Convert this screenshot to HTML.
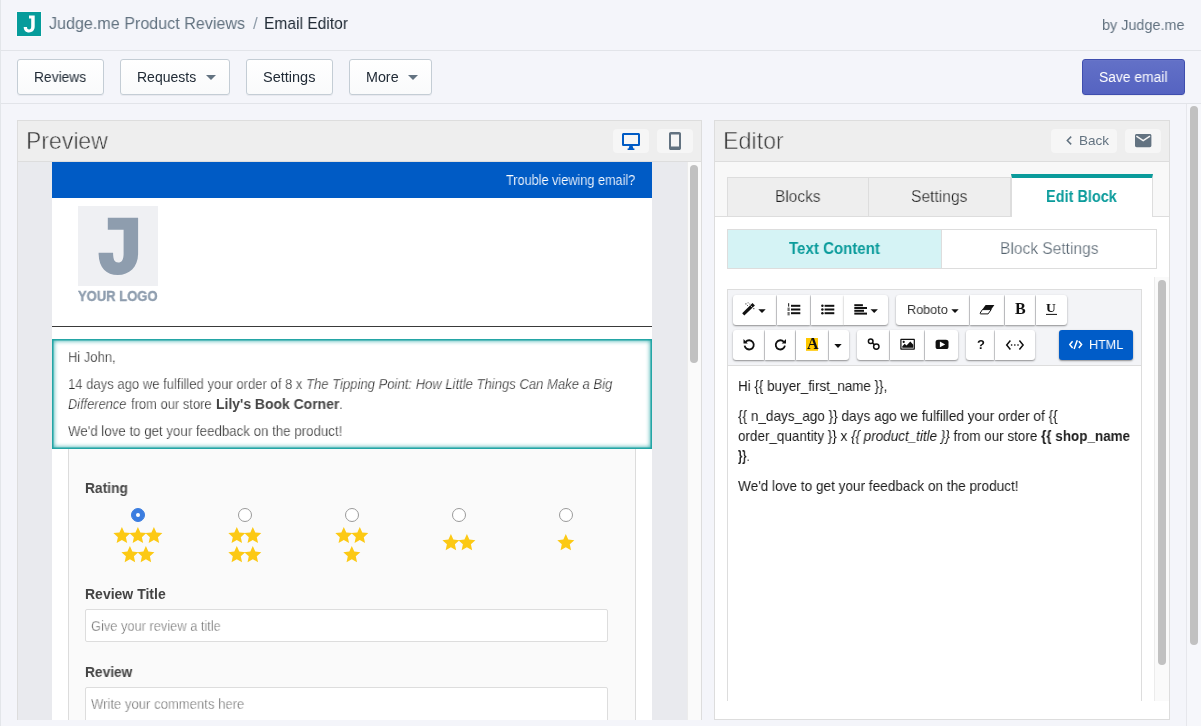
<!DOCTYPE html>
<html>
<head>
<meta charset="utf-8">
<title>Email Editor</title>
<style>
*{box-sizing:border-box;margin:0;padding:0}
html,body{width:1201px;height:726px;overflow:hidden}
body{background:#f4f5fa;font-family:"Liberation Sans",sans-serif;color:#212b36;position:relative}
.a{position:absolute}
.t{position:absolute;display:inline-block;white-space:nowrap;transform-origin:0 50%;will-change:transform}
.btn{position:absolute;top:59px;height:36px;border:1px solid #c4cdd5;border-radius:3px;background:linear-gradient(#fff,#f9fafb);box-shadow:0 1px 0 rgba(22,29,37,.05)}
.car{position:absolute;width:0;height:0;border-left:5px solid transparent;border-right:5px solid transparent;border-top:5px solid #637381}
.ib{position:absolute;top:129px;height:24px;border-radius:4px;background:#f6f6f6}
.tab{position:absolute;top:177px;height:40px;background:#eee;border:1px solid #ddd}
.nb{position:absolute;height:30px;background:#fff;border-radius:3px;box-shadow:0 1px 1.5px rgba(0,0,0,.32),0 1px 3px rgba(0,0,0,.12)}
.r1{top:295px}.r2{top:330px}
.radio{position:absolute;top:508px;width:14px;height:14px;border-radius:50%;border:1px solid #9a9a9a;background:#fff}
svg{position:absolute;overflow:visible}

</style>
</head>
<body>
<svg width="0" height="0" style="left:0;top:0"><defs>
<symbol id="star" viewBox="0 0 100 95.1" overflow="visible"><path d="M50.0 0.0 L64.5 32.6 L100.0 36.3 L73.5 60.2 L80.9 95.1 L50.0 77.3 L19.1 95.1 L26.5 60.2 L0.0 36.3 L35.5 32.6 Z" fill="#fcc914"/></symbol>
</defs></svg>
<!-- top bars -->
<div class="a" style="left:0;top:50px;width:1201px;height:1px;background:#e2e4e9"></div>
<div class="a" style="left:0;top:103px;width:1201px;height:1px;background:#e2e4e9"></div>
<div class="a" style="left:0;top:0;width:1px;height:726px;background:#e3e6ea"></div>
<div class="a" style="left:17px;top:12px;width:24px;height:24px;background:#069c9b;box-shadow:0 0 0 1px rgba(255,255,255,.4)"></div>
<svg style="left:17px;top:12px" width="24" height="24" viewBox="0 0 24 24"><path d="M12 3.500H17.700V14.500C17.700 18.500 15.300 20.400 12 20.400 8.800 20.400 6.700 18.300 6.700 14.900H10C10 16.600 10.700 17.400 12.100 17.400 13.500 17.400 14.200 16.500 14.200 14.500V6.600H12Z" fill="#fff"/></svg>
<div class="btn" style="left:17px;width:87px"></div>
<div class="btn" style="left:120px;width:110px"></div>
<div class="btn" style="left:246px;width:87px"></div>
<div class="btn" style="left:349px;width:83px"></div>
<div class="car" style="left:206px;top:75px"></div>
<div class="car" style="left:408px;top:75px"></div>
<div class="btn" style="left:1082px;width:103px;background:linear-gradient(#6371c7,#5563c1);border-color:#3f4eae;box-shadow:inset 0 1px 0 0 #6774c8,0 1px 0 0 rgba(22,29,37,.05)"></div>
<!-- page scrollbar -->
<div class="a" style="left:1186px;top:104px;width:15px;height:622px;background:#f6f7fb;border-left:1px solid #e6e7ec"></div>
<div class="a" style="left:1190px;top:106px;width:8px;height:539px;border-radius:4px;background:#c1c1c1"></div>

<!-- ================= PREVIEW PANEL ================= -->
<div class="a" style="left:17px;top:120px;width:685px;height:600px;background:#fff;border:1px solid #ddd;border-bottom:0"></div>
<div class="a" style="left:18px;top:121px;width:683px;height:41px;background:#eee;border-bottom:1px solid #ddd"></div>
<div class="ib" style="left:613px;width:36px"></div>
<div class="ib" style="left:657px;width:36px"></div>
<!-- desktop icon -->
<svg style="left:622px;top:132.5px" width="18" height="17" viewBox="0 0 18 17"><path d="M1.6 0h14.8c.9 0 1.6.7 1.6 1.600v9.800c0 .9-.7 1.600-1.600 1.600H1.600C.7 13 0 12.300 0 11.400V1.600C0 .7.7 0 1.600 0zm.4 2v9h14V2z" fill="#005bc5" fill-rule="evenodd"/><path d="M7.400 13h3.200l.8 2.600h1v1.400H5.600v-1.400h1z" fill="#005bc5"/></svg>
<!-- mobile icon -->
<svg style="left:669px;top:132px" width="12" height="18" viewBox="0 0 12 18"><path d="M1.800 0h8.400c1 0 1.800.8 1.800 1.800v14.400c0 1-.8 1.800-1.800 1.800H1.800C.8 18 0 17.200 0 16.200V1.800C0 .8.800 0 1.800 0zM2 2.500v12h8v-12z" fill="#637381" fill-rule="evenodd"/></svg>
<!-- preview content -->
<div class="a" style="left:18px;top:162px;width:34px;height:558px;background:#e9eaee"></div>
<div class="a" style="left:652px;top:162px;width:35px;height:558px;background:#e9eaee"></div>
<div class="a" style="left:687px;top:162px;width:14px;height:558px;background:#fafafa;border-left:1px solid #ececec"></div>
<div class="a" style="left:690px;top:165px;width:8px;height:198px;border-radius:4px;background:#c1c1c1"></div>
<div class="a" style="left:52px;top:162px;width:600px;height:36px;background:#005bc5"></div>
<div class="a" style="left:78px;top:206px;width:80px;height:80px;background:#eff0f3"></div>
<svg style="left:78px;top:206px" width="80" height="80" viewBox="0 0 80 80"><path d="M29.800 11.800H60.100V47.500C60.100 61 51.500 69 39.800 69 28 69 20.600 61.500 20.600 46.800H35.100C35.100 53.500 36.500 56.500 40.200 56.500 43.800 56.500 45.600 53.800 45.600 47.500V23.700H29.800z" fill="#8e9dae"/></svg>
<div class="a" style="left:52px;top:326px;width:600px;height:1px;background:#3a3a3a"></div>
<!-- form -->
<div class="a" style="left:68px;top:449px;width:568px;height:271px;background:#fafafa;border-left:1px solid #dcdcdc;border-right:1px solid #dcdcdc"></div>
<!-- selected block -->
<div class="a" style="left:52px;top:339px;width:600px;height:110px;background:#fff;box-shadow:inset 0 0 0 1.5px rgba(22,160,160,.85),inset 0 0 4px 2px rgba(22,160,160,.8)"></div>
<!-- radios -->
<div class="radio" style="left:131px;border-color:#3b7de0;background:#3b7de0"></div>
<div class="a" style="left:136px;top:513px;width:4px;height:4px;border-radius:50%;background:#fff"></div>
<div class="radio" style="left:238px"></div>
<div class="radio" style="left:345px"></div>
<div class="radio" style="left:452px"></div>
<div class="radio" style="left:559px"></div>
<!-- stars -->
<svg style="left:0;top:0" width="1201" height="726">
<use href="#star" x="113.40" y="526.90" width="17.0" height="16.2"/>
<use href="#star" x="129.40" y="526.90" width="17.0" height="16.2"/>
<use href="#star" x="145.40" y="526.90" width="17.0" height="16.2"/>
<use href="#star" x="121.40" y="546.00" width="17.0" height="16.2"/>
<use href="#star" x="137.40" y="546.00" width="17.0" height="16.2"/>
<use href="#star" x="228.30" y="526.90" width="17.0" height="16.2"/>
<use href="#star" x="228.30" y="546.00" width="17.0" height="16.2"/>
<use href="#star" x="244.30" y="526.90" width="17.0" height="16.2"/>
<use href="#star" x="244.30" y="546.00" width="17.0" height="16.2"/>
<use href="#star" x="335.30" y="526.90" width="17.0" height="16.2"/>
<use href="#star" x="351.30" y="526.90" width="17.0" height="16.2"/>
<use href="#star" x="343.30" y="546.00" width="17.0" height="16.2"/>
<use href="#star" x="442.40" y="534.00" width="17.0" height="16.2"/>
<use href="#star" x="458.40" y="534.00" width="17.0" height="16.2"/>
<use href="#star" x="557.30" y="534.00" width="17.0" height="16.2"/>
</svg>
<!-- inputs -->
<div class="a" style="left:85px;top:609px;width:523px;height:33px;background:#fff;border:1px solid #ddd;border-radius:2px"></div>
<div class="a" style="left:85px;top:687px;width:523px;height:40px;background:#fff;border:1px solid #ddd;border-radius:2px"></div>
<!-- mask below preview -->
<div class="a" style="left:0;top:720px;width:711px;height:6px;background:#f4f5fa"></div>
<div class="a" style="left:0;top:720px;width:1px;height:6px;background:#e3e6ea"></div>

<!-- ================= EDITOR PANEL ================= -->
<div class="a" style="left:714px;top:120px;width:456px;height:600px;background:#fff;border:1px solid #ddd"></div>
<div class="a" style="left:715px;top:121px;width:454px;height:41px;background:#eee;border-bottom:1px solid #ddd"></div>
<div class="ib" style="left:1051px;width:66px"></div>
<div class="ib" style="left:1125px;width:36px"></div>
<svg style="left:1065.500px;top:136.100px" width="6" height="9" viewBox="0 0 6 9"><path d="M5.200 .6 1.300 4.500 5.200 8.400" fill="none" stroke="#637381" stroke-width="1.500"/></svg>
<svg style="left:1135px;top:134.200px" width="16.400" height="13.200" viewBox="0 0 16.400 13.200"><path d="M1.600 0h13.200c.9 0 1.600.7 1.600 1.600v10c0 .9-.7 1.600-1.600 1.600H1.600C.7 13.200 0 12.500 0 11.600v-10C0 .7.700 0 1.600 0z" fill="#637381"/><path d="M1.400 2.200 8.200 6.600 15 2.200" fill="none" stroke="#f6f6f6" stroke-width="1.500"/></svg>
<!-- tab strip -->
<div class="a" style="left:715px;top:162px;width:454px;height:55px;background:#f8f8f8;border-bottom:1px solid #ddd"></div>
<div class="tab" style="left:727px;width:142px"></div>
<div class="tab" style="left:868px;width:143px"></div>
<div class="a" style="left:1011px;top:174px;width:142px;height:43px;background:#fff;border-left:1px solid #ddd;border-right:1px solid #ddd;border-top:4px solid #0a9b9b"></div>
<!-- sub tabs -->
<div class="a" style="left:727px;top:229px;width:430px;height:40px;background:#fff;border:1px solid #ddd"></div>
<div class="a" style="left:727px;top:229px;width:215px;height:40px;background:#d5f3f5;border:1px solid #ddd"></div>
<!-- inner scroll track -->
<div class="a" style="left:1154px;top:277px;width:15px;height:424px;background:#fafafa;border-left:1px solid #ececec"></div>
<div class="a" style="left:1158px;top:280px;width:8px;height:385px;border-radius:4px;background:#c1c1c1"></div>
<!-- toolbar -->
<div class="a" style="left:727px;top:289px;width:415px;height:412px;background:#fff;border:1px solid #ddd;border-bottom:0"></div>
<div class="a" style="left:728px;top:290px;width:413px;height:76px;background:#f3f4f7;border-bottom:1px solid #ddd"></div>
<div class="nb r1" style="left:733px;width:43px;border-radius:3px 0 0 3px"></div>
<div class="nb r1" style="left:777px;width:33px;border-radius:0"></div>
<div class="nb r1" style="left:811px;width:32.5px;border-radius:0"></div>
<div class="nb r1" style="left:844px;width:44px;border-radius:0 3px 3px 0"></div>
<div class="nb r1" style="left:896px;width:73px;border-radius:3px 0 0 3px"></div>
<div class="nb r1" style="left:970px;width:34px;border-radius:0"></div>
<div class="nb r1" style="left:1005px;width:30px;border-radius:0"></div>
<div class="nb r1" style="left:1036px;width:31px;border-radius:0 3px 3px 0"></div>
<div class="nb r2" style="left:733px;width:31px;border-radius:3px 0 0 3px"></div>
<div class="nb r2" style="left:765px;width:30px;border-radius:0"></div>
<div class="nb r2" style="left:796px;width:32px;border-radius:0"></div>
<div class="nb r2" style="left:829px;width:20px;border-radius:0 3px 3px 0"></div>
<div class="nb r2" style="left:857px;width:32px;border-radius:3px 0 0 3px"></div>
<div class="nb r2" style="left:890px;width:34px;border-radius:0"></div>
<div class="nb r2" style="left:925px;width:33px;border-radius:0 3px 3px 0"></div>
<div class="nb r2" style="left:966px;width:28px;border-radius:3px 0 0 3px"></div>
<div class="nb r2" style="left:995px;width:40px;border-radius:0 3px 3px 0"></div>
<div class="nb r2" style="left:1059px;top:330px;width:74px;height:30px;background:#005cc8"></div>
<!--ICONS-START-->
<svg style="left:0;top:0" width="1201" height="726" viewBox="0 0 1201 726">
<g fill="#111" stroke="none">
<!-- wand -->
<path d="M744.300 315.400 L742.200 313.300 L752.500 303 L754.900 305.400 Z"/><path d="M750.600 305.600 L752.400 307.400" stroke="#fff" stroke-width=".7"/>
<rect x="745.300" y="303.300" width="1.200" height="1.200" opacity=".7"/><rect x="747.600" y="302.300" width="1" height="1" opacity=".6"/><rect x="749.300" y="303.600" width="1" height="1" opacity=".6"/><rect x="747" y="305" width="1" height="1" opacity=".6"/><rect x="753.200" y="308" width="1.200" height="1.200" opacity=".7"/>
<!-- carets -->
<path d="M758.300 309.200h7.400l-3.700 3.800z"/>
<path d="M870.500 309.200h7.400l-3.700 3.800z"/>
<path d="M951.300 309.200h7.400l-3.700 3.800z"/>
<path d="M834.300 344.100h7.400l-3.700 3.800z"/>
<!-- ol -->
<rect x="791" y="304.800" width="9.300" height="2"/><rect x="791" y="308.500" width="9.300" height="2"/><rect x="791" y="312.200" width="9.300" height="2"/>
<rect x="788" y="303.200" width="1.200" height="3.400" opacity=".85"/><rect x="787.500" y="307.600" width="2.200" height="3.400" opacity=".6"/><rect x="787.500" y="312" width="2.200" height="3.400" opacity=".6"/>
<!-- ul -->
<rect x="824.600" y="304.800" width="9.700" height="2"/><rect x="824.600" y="308.500" width="9.700" height="2"/><rect x="824.600" y="312.200" width="9.700" height="2"/>
<circle cx="822.400" cy="305.800" r="1.250"/><circle cx="822.400" cy="309.500" r="1.250"/><circle cx="822.400" cy="313.200" r="1.250"/>
<!-- align left -->
<rect x="854.300" y="304.200" width="8.600" height="2"/><rect x="854.300" y="307" width="12.700" height="2"/><rect x="854.300" y="309.800" width="9.700" height="2"/><rect x="854.300" y="312.600" width="12.700" height="2"/>
<!-- eraser -->
<path d="M985.600 304.900h8.800l-3.600 5h-8.800z"/>
<path d="M982.400 309.600h8.800l-3.100 4.300h-7.400c-.6 0-.8-.5-.5-.9z" fill="#fff" stroke="#111" stroke-width="1"/>
<!-- picture -->
<path d="M901.300 338.800h12.600c.6 0 1 .4 1 1v9c0 .6-.4 1-1 1h-12.600c-.6 0-1-.4-1-1v-9c0-.6.400-1 1-1zm.2 1.300v8.400h12.200v-8.400z" fill-rule="evenodd"/>
<path d="M902.300 347.800v-1.600l2.400-2.400 1.800 1.800 3.800-4 3 3.200v3z"/><circle cx="903.700" cy="341.900" r="1.100"/>
<!-- video -->
<path d="M938.300 339.700h7.500c2.200 0 2.700.8 2.700 2.600v4.200c0 1.800-.5 2.600-2.700 2.600h-7.500c-2.200 0-2.700-.8-2.700-2.600v-4.200c0-1.800.5-2.600 2.700-2.600z"/>
<path d="M939.900 341.500l5.300 2.900-5.300 2.900z" fill="#fff"/>
</g>
<g fill="none" stroke="#111">
<!-- undo -->
<path d="M745.700 341.800A4.600 4.600 0 1 1 744.600 345.600" stroke-width="1.800"/>
<path d="M743.500 339.100v4.300h4.300z" fill="#111" stroke="none"/>
<!-- redo -->
<path d="M783.800 341.800A4.600 4.600 0 1 0 784.900 345.600" stroke-width="1.800"/>
<path d="M786 339.100v4.300h-4.300z" fill="#111" stroke="none"/>
<!-- link -->
<circle cx="870.700" cy="341.200" r="2.300" stroke-width="1.500"/><circle cx="876.300" cy="346.600" r="2.700" stroke-width="1.500"/>
<path d="M872.400 342.900l2 1.900" stroke-width="1.500"/>
<!-- code view -->
<path d="M1010.400 340.600 1006.700 345 1010.400 349.400M1019.400 340.600 1023.100 345 1019.400 349.400" stroke-width="1.500"/>
</g>
<g fill="#111"><rect x="1010.900" y="344.300" width="1.400" height="1.400"/><rect x="1014.100" y="344.300" width="1.400" height="1.400"/><rect x="1017.300" y="344.300" width="1.400" height="1.400"/></g>
<!-- A highlight -->
<rect x="806" y="338" width="12" height="12.800" fill="#ffc800"/>
<!-- U underline -->
<rect x="1046" y="313.900" width="11" height="1" fill="#111"/>
<!-- html </> -->
<g fill="none" stroke="#fff" stroke-width="1.500"><path d="M1072.600 341.300 1069.800 344.600 1072.600 347.900M1078.800 341.300 1081.600 344.600 1078.800 347.900M1077.300 340.200 1074.100 349"/></g>
</svg>
<!--ICONS-END-->

<!-- text layer -->
<span class="t" id="t0" style="left:49.00px;top:13.31px;font-size:17px;line-height:22px;transform:scaleX(0.9471);color:#637381;">Judge.me Product Reviews</span>
<span class="t" id="t1" style="left:252.80px;top:13.31px;font-size:17px;line-height:22px;transform:scaleX(1.0000);color:#919eab;">/</span>
<span class="t" id="t2" style="left:263.50px;top:13.31px;font-size:17px;line-height:22px;transform:scaleX(0.9166);color:#212b36;">Email Editor</span>
<span class="t" id="t3" style="left:1101.50px;top:14.80px;font-size:15px;line-height:20px;transform:scaleX(0.9605);color:#637381;">by Judge.me</span>
<span class="t" id="t4" style="left:34.20px;top:68.15px;font-size:14px;line-height:18px;transform:scaleX(0.9848);">Reviews</span>
<span class="t" id="t5" style="left:137.30px;top:68.15px;font-size:14px;line-height:18px;transform:scaleX(0.9957);">Requests</span>
<span class="t" id="t6" style="left:263.30px;top:68.15px;font-size:14px;line-height:18px;transform:scaleX(1.0357);">Settings</span>
<span class="t" id="t7" style="left:366.20px;top:68.15px;font-size:14px;line-height:18px;transform:scaleX(1.0217);">More</span>
<span class="t" id="t8" style="left:1099.00px;top:68.15px;font-size:14px;line-height:18px;transform:scaleX(0.9889);color:#fff;">Save email</span>
<span class="t" id="t9" style="left:25.50px;top:124.71px;font-size:24.5px;line-height:32px;transform:scaleX(0.9376);color:#333;-webkit-text-stroke:.55px #eee;">Preview</span>
<span class="t" id="t10" style="left:722.50px;top:124.71px;font-size:24.5px;line-height:32px;transform:scaleX(0.9498);color:#333;-webkit-text-stroke:.55px #eee;">Editor</span>
<span class="t" id="t11" style="left:506.00px;top:171.15px;font-size:14px;line-height:18px;transform:scaleX(0.9063);color:#fff;-webkit-text-stroke:.15px #005bc5;">Trouble viewing email?</span>
<span class="t" id="t12" style="left:77.90px;top:287.15px;font-size:14px;line-height:18px;transform:scaleX(0.9291);color:#8e9dae;font-weight:bold;-webkit-text-stroke:.4px #8e9dae;">YOUR LOGO</span>
<span class="t" id="t13" style="left:68.00px;top:348.45px;font-size:14px;line-height:18px;transform:scaleX(0.9268);color:#2a2a2a;-webkit-text-stroke:.25px #fff;">Hi John,</span>
<span class="t" id="t14" style="left:68.00px;top:375.15px;font-size:14px;line-height:18px;transform:scaleX(0.9328);color:#2a2a2a;-webkit-text-stroke:.25px #fff;">14 days ago we fulfilled your order of 8 x <i>The Tipping Point: How Little Things Can Make a Big</i></span>
<span class="t" id="t15" style="left:68.00px;top:395.15px;font-size:14px;line-height:18px;transform:scaleX(0.9136);color:#2a2a2a;-webkit-text-stroke:.25px #fff;"><i>Difference</i></span>
<span class="t" id="t16" style="left:131.00px;top:395.15px;font-size:14px;line-height:18px;transform:scaleX(0.9249);color:#2a2a2a;-webkit-text-stroke:.25px #fff;">from our store</span>
<span class="t" id="t17" style="left:215.50px;top:395.15px;font-size:14px;line-height:18px;transform:scaleX(0.9950);color:#444;"><b>Lily's Book Corner</b></span>
<span class="t" id="t18" style="left:339.30px;top:395.15px;font-size:14px;line-height:18px;transform:scaleX(1.0000);color:#2a2a2a;-webkit-text-stroke:.25px #fff;">.</span>
<span class="t" id="t19" style="left:68.00px;top:422.45px;font-size:14px;line-height:18px;transform:scaleX(0.9497);color:#2a2a2a;-webkit-text-stroke:.25px #fff;">We'd love to get your feedback on the product!</span>
<span class="t" id="t20" style="left:85.30px;top:479.45px;font-size:14px;line-height:18px;transform:scaleX(0.9848);color:#444;font-weight:bold;">Rating</span>
<span class="t" id="t21" style="left:85.30px;top:585.15px;font-size:14px;line-height:18px;transform:scaleX(0.9979);color:#444;font-weight:bold;">Review Title</span>
<span class="t" id="t22" style="left:85.30px;top:662.95px;font-size:14px;line-height:18px;transform:scaleX(0.9824);color:#444;font-weight:bold;">Review</span>
<span class="t" id="t23" style="left:90.60px;top:617.15px;font-size:14px;line-height:18px;transform:scaleX(0.9166);color:#6a6a6a;-webkit-text-stroke:.3px #fff;">Give your review a title</span>
<span class="t" id="t24" style="left:90.60px;top:694.95px;font-size:14px;line-height:18px;transform:scaleX(0.9353);color:#6a6a6a;-webkit-text-stroke:.3px #fff;">Write your comments here</span>
<span class="t" id="t25" style="left:775.30px;top:185.96px;font-size:16px;line-height:21px;transform:scaleX(0.9634);color:#222;-webkit-text-stroke:.25px #eee;">Blocks</span>
<span class="t" id="t26" style="left:911.20px;top:185.96px;font-size:16px;line-height:21px;transform:scaleX(0.9756);color:#222;-webkit-text-stroke:.25px #eee;">Settings</span>
<span class="t" id="t27" style="left:1046.20px;top:185.66px;font-size:16px;line-height:21px;transform:scaleX(0.9050);color:#0a9b9b;font-weight:bold;">Edit Block</span>
<span class="t" id="t28" style="left:789.30px;top:237.96px;font-size:16px;line-height:21px;transform:scaleX(0.9411);color:#0a9b9b;font-weight:bold;">Text Content</span>
<span class="t" id="t29" style="left:999.70px;top:237.96px;font-size:16px;line-height:21px;transform:scaleX(0.9715);color:#55636f;-webkit-text-stroke:.25px #fff;">Block Settings</span>
<span class="t" id="t30" style="left:1079.20px;top:131.72px;font-size:13.5px;line-height:18px;transform:scaleX(0.9928);color:#637381;">Back</span>
<span class="t" id="t31" style="left:906.80px;top:300.80px;font-size:13px;line-height:17px;transform:scaleX(0.9732);color:#333;">Roboto</span>
<span class="t" id="t32" style="left:1088.50px;top:335.70px;font-size:13px;line-height:17px;transform:scaleX(0.9664);color:#fff;">HTML</span>
<span class="t" id="t33" style="left:1014.80px;top:298.36px;font-size:16px;line-height:21px;transform:scaleX(1.0000);color:#111;font-weight:bold;font-family:'Liberation Serif',serif;">B</span>
<span class="t" id="t34" style="left:1046.30px;top:299.02px;font-size:13.5px;line-height:18px;transform:scaleX(1.0000);color:#111;font-weight:bold;font-family:'Liberation Serif',serif;">U</span>
<span class="t" id="t35" style="left:976.80px;top:336.00px;font-size:13px;line-height:17px;transform:scaleX(1.0000);color:#111;font-weight:bold;">?</span>
<span class="t" id="t36" style="left:806.50px;top:333.46px;font-size:16px;line-height:21px;transform:scaleX(1.0000);color:#111;font-weight:bold;font-family:'Liberation Serif',serif;">A</span>
<span class="t" id="t37" style="left:738.40px;top:375.80px;font-size:15px;line-height:20px;transform:scaleX(0.8953);color:#1c1c1c;">Hi {{ buyer_first_name }},</span>
<span class="t" id="t38" style="left:738.40px;top:405.80px;font-size:15px;line-height:20px;transform:scaleX(0.9060);color:#1c1c1c;">{{ n_days_ago }} days ago we fulfilled your order of {{</span>
<span class="t" id="t39" style="left:738.40px;top:425.80px;font-size:15px;line-height:20px;transform:scaleX(0.8974);color:#1c1c1c;">order_quantity }} x <i>{{ product_title }}</i> from our store <b>{{ shop_name</b></span>
<span class="t" id="t40" style="left:738.40px;top:445.80px;font-size:15px;line-height:20px;transform:scaleX(0.7314);color:#1c1c1c;"><b>}}</b>.</span>
<span class="t" id="t41" style="left:738.40px;top:475.80px;font-size:15px;line-height:20px;transform:scaleX(0.9068);color:#1c1c1c;">We'd love to get your feedback on the product!</span>
</body>
</html>
